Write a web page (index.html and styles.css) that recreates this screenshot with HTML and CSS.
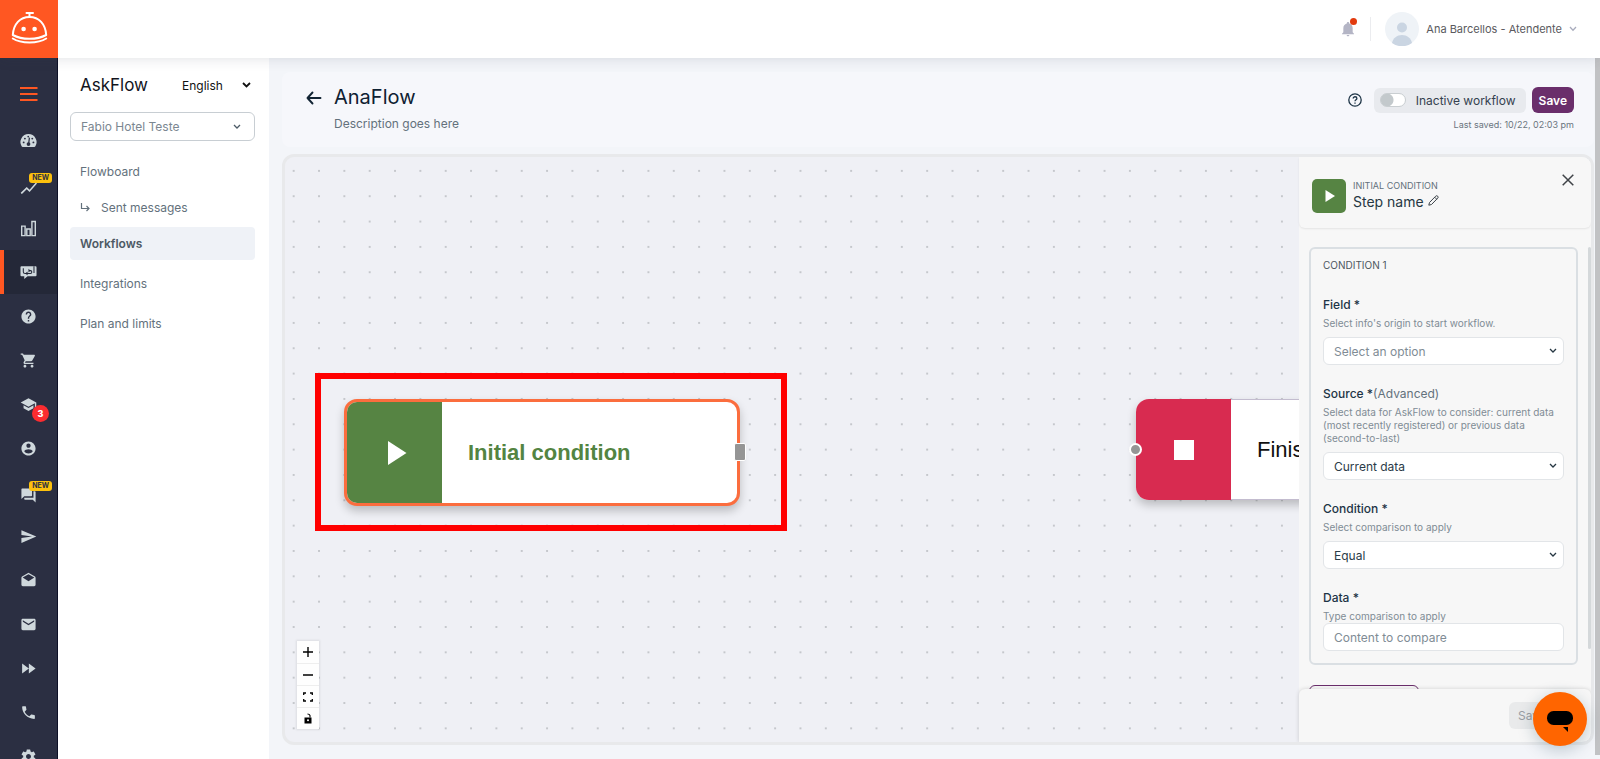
FILE: index.html
```html
<!DOCTYPE html>
<html lang="en">
<head>
    <meta charset="UTF-8">
    <title>AskFlow - AnaFlow</title>
    <link rel="stylesheet" href="styles.css">
</head>
<body>
<header class="topbar">
    <a href="#" class="logo" aria-label="Home">
        <svg width="58" height="58" viewBox="0 0 58 58" fill="none" stroke="#fff" stroke-width="2" stroke-linecap="round">
            <path d="M26.500 13h6.500M29.500 13v4"/>
            <path d="M12.800 35C13.500 24 20 17 29.500 17S45.500 24 46.200 35C37 40 22 40 12.800 35z" stroke-linejoin="round"/>
            <path d="M12.800 38.500c8 5.300 25.400 5.300 33.400 0"/>
            <circle cx="23.600" cy="29" r="2.300" fill="#fff" stroke="none"/>
            <circle cx="34.600" cy="29" r="2.300" fill="#fff" stroke="none"/>
        </svg>
    </a>
    <div class="account">
        <button class="bell" aria-label="Notifications">
            <svg width="16" height="16" viewBox="0 0 24 24" fill="#b4b5c5"><path d="M12 23c1.100 0 2-.9 2-2h-4c0 1.100.9 2 2 2zm7-6v-6c0-3.500-1.900-6.300-5.200-7.100V3.200C13.800 2.300 13 1.500 12 1.500s-1.800.8-1.800 1.700v.7C6.900 4.700 5 7.500 5 11v6l-2 2v1h18v-1z"/></svg>
            <span class="bell-dot"></span>
        </button>
        <span class="divider"></span>
        <button class="user">
            <svg width="34" height="34" viewBox="0 0 34 34">
                <circle cx="17" cy="17" r="17" fill="#eff3f7"/>
                <circle cx="17" cy="15.500" r="5" fill="#cad5e2"/>
                <path d="M7 31c1-5 5-8 10-8s9 3 10 8a17 17 0 0 1-20 0z" fill="#cad5e2"/>
            </svg>
            <span>Ana Barcellos - Atendente</span>
            <svg width="8" height="6" viewBox="0 0 8 6" fill="none" stroke="#a9acbd" stroke-width="1.300"><path d="M1 1l3 3.200L7 1"/></svg>
        </button>
    </div>
</header>

<div class="page">
    <!-- icon rail -->
    <nav class="rail" aria-label="Main">
        <button class="rail-menu" aria-label="Menu">
            <svg width="18" height="16" viewBox="0 0 18 16" stroke="#ff5722" stroke-width="2"><path d="M0 2h17.500M0 8h17.500M0 14h17.500"/></svg>
        </button>
        <a href="#" aria-label="Dashboard"><svg viewBox="0 0 18 18"><path d="M9 2.200a8.500 8.500 0 0 0-7.300 12.900c.3.500.7.700 1.200.7h12.200c.5 0 .9-.2 1.200-.7A8.500 8.500 0 0 0 9 2.200z"/><path d="M9 13.500l1-7.500" stroke="#2b2f42" stroke-width="1.300"/><g fill="#2b2f42"><circle cx="9" cy="12.800" r="2"/><circle cx="3.900" cy="11" r="1"/><circle cx="5.200" cy="7" r="1"/><circle cx="8.700" cy="4.800" r=".9"/><circle cx="13" cy="7" r="1"/><circle cx="14.200" cy="11" r="1"/></g></svg></a>
        <a href="#" class="has-new" aria-label="Trends"><svg viewBox="0 0 24 24"><path d="M3.500 20.500l6-6 4 4L24 6.400l-1.600-1.600-8.900 10.500-4-4L1 19.500l1.300 1.800z"/></svg><span class="new">NEW</span></a>
        <a href="#" aria-label="Reports"><svg viewBox="0 0 18 18"><path d="M1.800 6.500h3.600v10H1.800zM7.200 9.500h3.600v7H7.200zM12.600 1.500h3.600v15h-3.600z" fill="none" stroke="#cfd8dc" stroke-width="1.500"/></svg></a>
        <a href="#" class="active" aria-label="AskFlow"><svg viewBox="0 0 18 18"><path d="M1.500 2.500h15q1 0 1 1v8.500q0 1-1 1H8L4.500 16v-3h-3q-1 0-1-1V3.500q0-1 1-1z"/><path d="M3.500 4.500v4q0 1.500 2 1.500h5.500q1.500 0 1.500-1.500T11 7H9.500M14.800 2.500v7" fill="none" stroke="#242838" stroke-width="1.100"/><path d="M8 8v4L5.500 10zM9 5v4l2-2z" fill="#242838"/></svg></a>
        <a href="#" aria-label="Help"><svg viewBox="0 0 24 24"><path d="M12 2C6.480 2 2 6.480 2 12s4.480 10 10 10 10-4.480 10-10S17.520 2 12 2zm1 17h-2v-2h2v2zm2.070-7.750l-.9.920C13.450 12.900 13 13.500 13 15h-2v-.5c0-1.100.45-2.100 1.170-2.830l1.240-1.260c.37-.36.590-.86.590-1.410 0-1.100-.9-2-2-2s-2 .9-2 2H8c0-2.210 1.790-4 4-4s4 1.790 4 4c0 .88-.36 1.680-.93 2.250z"/></svg></a>
        <a href="#" aria-label="Store"><svg viewBox="0 0 24 24"><path d="M7 18c-1.100 0-1.990.9-1.990 2S5.900 22 7 22s2-.9 2-2-.9-2-2-2zM1 2v2h2l3.600 7.590-1.350 2.450c-.16.280-.25.610-.25.960 0 1.100.9 2 2 2h12v-2H7.420c-.14 0-.25-.11-.25-.25l.03-.12.900-1.630h7.450c.75 0 1.410-.41 1.750-1.030l3.580-6.490A1 1 0 0 0 20 4H5.210l-.94-2H1zm16 16c-1.100 0-1.990.9-1.990 2s.89 2 1.990 2 2-.9 2-2-.9-2-2-2z"/></svg></a>
        <a href="#" aria-label="Academy"><svg viewBox="0 0 24 24"><path d="M5 13.180v4L12 21l7-3.820v-4L12 17l-7-3.820zM12 3L1 9l11 6 9-4.910V17h2V9L12 3z"/></svg><span class="count">3</span></a>
        <a href="#" aria-label="Profile"><svg viewBox="0 0 24 24"><path d="M12 2C6.480 2 2 6.480 2 12s4.480 10 10 10 10-4.480 10-10S17.520 2 12 2zm0 3c1.660 0 3 1.340 3 3s-1.340 3-3 3-3-1.340-3-3 1.340-3 3-3zm0 14.200c-2.500 0-4.710-1.280-6-3.220.03-1.990 4-3.080 6-3.080 1.990 0 5.970 1.090 6 3.080-1.290 1.940-3.500 3.220-6 3.220z"/></svg></a>
        <a href="#" class="has-new" aria-label="Chats"><svg viewBox="0 0 24 24"><path d="M21 6h-2v9H6v2c0 .55.450 1 1 1h11l4 4V7c0-.55-.45-1-1-1zm-4 6V3c0-.55-.45-1-1-1H3c-.55 0-1 .450-1 1v14l4-4h10c.55 0 1-.45 1-1z"/></svg><span class="new">NEW</span></a>
        <a href="#" aria-label="Send"><svg viewBox="0 0 24 24"><path d="M2.010 21L23 12 2.010 3 2 10l15 2-15 2z"/></svg></a>
        <a href="#" aria-label="Inbox"><svg viewBox="0 0 24 24"><path d="M21.990 8c0-.72-.37-1.350-.94-1.700L12 1 2.950 6.300C2.380 6.650 2 7.280 2 8v10c0 1.100.9 2 2 2h16c1.100 0 2-.9 2-2l-.01-10zM12 13L3.740 7.840 12 3l8.260 4.840L12 13z"/></svg></a>
        <a href="#" aria-label="Mail"><svg viewBox="0 0 24 24"><path d="M20 4H4c-1.100 0-1.990.9-1.990 2L2 18c0 1.100.9 2 2 2h16c1.100 0 2-.9 2-2V6c0-1.100-.9-2-2-2zm0 4l-8 5-8-5V6l8 5 8-5v2z"/></svg></a>
        <a href="#" aria-label="Forward"><svg viewBox="0 0 24 24"><path d="M3 19l9.500-7L3 5v14zM12.500 5v14l9.500-7z"/></svg></a>
        <a href="#" aria-label="Calls"><svg viewBox="0 0 24 24"><path d="M6.620 10.790c1.440 2.830 3.760 5.140 6.590 6.590l2.200-2.200c.27-.27.670-.36 1.020-.24 1.120.37 2.330.57 3.570.57.550 0 1 .45 1 1V20c0 .55-.45 1-1 1-9.390 0-17-7.610-17-17 0-.55.450-1 1-1h3.500c.55 0 1 .45 1 1 0 1.250.2 2.450.57 3.570.11.350.03.740-.25 1.020l-2.200 2.200z"/></svg></a>
        <a href="#" aria-label="Settings"><svg viewBox="0 0 24 24"><path d="M19.430 12.980c.04-.32.070-.64.070-.98s-.03-.66-.07-.98l2.110-1.650c.19-.15.240-.42.120-.64l-2-3.460c-.12-.22-.39-.3-.61-.22l-2.490 1c-.52-.4-1.080-.73-1.690-.98l-.38-2.650A.49.490 0 0 0 14 2h-4c-.25 0-.46.180-.49.420l-.38 2.650c-.61.250-1.170.59-1.690.98l-2.490-1c-.23-.09-.49 0-.61.220l-2 3.460c-.13.220-.07.490.12.640l2.110 1.650c-.04.320-.07.650-.07.980s.03.660.07.980l-2.110 1.650c-.19.150-.24.420-.12.640l2 3.460c.12.220.39.300.61.220l2.490-1c.52.400 1.080.73 1.690.98l.38 2.650c.03.240.24.420.49.420h4c.25 0 .46-.18.490-.42l.38-2.650c.61-.25 1.170-.59 1.690-.98l2.490 1c.23.090.49 0 .61-.22l2-3.460c.12-.22.070-.49-.12-.64l-2.110-1.650zM12 15.500c-1.930 0-3.500-1.570-3.500-3.500s1.570-3.500 3.500-3.500 3.500 1.570 3.500 3.500-1.570 3.500-3.500 3.500z"/></svg></a>
    </nav>

    <!-- AskFlow menu -->
    <aside class="menu">
        <div class="menu-head">
            <h2>AskFlow</h2>
            <div class="select language">
                <select aria-label="Language"><option>English</option></select>
                <svg width="9" height="6" viewBox="0 0 9 6" fill="none" stroke="#111" stroke-width="1.800"><path d="M1 1l3.500 3.500L8 1"/></svg>
            </div>
        </div>
        <div class="select hotel">
            <select aria-label="Hotel"><option>Fabio Hotel Teste</option></select>
            <svg width="8" height="6" viewBox="0 0 8 6" fill="none" stroke="#4d5b66" stroke-width="1.300"><path d="M1 1l3 3L7 1"/></svg>
        </div>
        <ul>
            <li class="tight"><a href="#">Flowboard</a></li>
            <li class="tight"><a href="#"><svg width="10" height="10" viewBox="0 0 10 10" fill="none" stroke="#63717c" stroke-width="1.200"><path d="M1.500 0v5.500H9M6.500 3L9 5.500 6.500 8"/></svg>Sent messages</a></li>
            <li><a href="#" class="current">Workflows</a></li>
            <li><a href="#">Integrations</a></li>
            <li><a href="#">Plan and limits</a></li>
        </ul>
    </aside>

    <main class="main">
        <div class="flow-head">
            <button class="back" aria-label="Back">
                <svg width="16" height="14" viewBox="0 0 16 14" fill="none" stroke="#122433" stroke-width="1.900" stroke-linecap="round" stroke-linejoin="round"><path d="M6.500 1.500L1.500 7l5 5.500M1.500 7h13"/></svg>
            </button>
            <div class="flow-title">
                <h1>AnaFlow</h1>
                <p>Description goes here</p>
            </div>
            <div class="flow-side">
                <div class="flow-actions">
                    <button class="help" aria-label="Help">
                        <svg width="14" height="14" viewBox="0 0 14 14" fill="none" stroke="#1d3446" stroke-width="1.300"><circle cx="7" cy="7" r="6.200"/><path d="M5.200 5.500c0-2.400 3.700-2.300 3.700-.1C8.900 6.700 7 6.800 7 8.300M7 9.500v1.300"/></svg>
                    </button>
                    <label class="toggle"><input type="checkbox"><span>Inactive workflow</span></label>
                    <button class="save">Save</button>
                </div>
                <p>Last saved: 10/22, 02:03 pm</p>
            </div>
        </div>

        <section class="board">
            <div class="canvas">
                <svg class="dots" width="100%" height="100%">
                    <defs>
                        <pattern id="grid" x="-4" y="1.200" width="25.340" height="25.340" patternUnits="userSpaceOnUse">
                            <circle cx="12.670" cy="12.670" r=".9" fill="#b3b5ba"/>
                        </pattern>
                    </defs>
                    <rect width="100%" height="100%" fill="url(#grid)"/>
                </svg>
                <div class="highlight"></div>
                <div class="node node-start">
                    <div class="node-icon"><svg width="20" height="24" viewBox="0 0 20 24" fill="#fff"><path d="M1 0l18.500 12L1 24z"/></svg></div>
                    <div class="node-name">Initial condition</div>
                    <span class="port port-out"></span>
                </div>
                <div class="node node-end">
                    <div class="node-icon"><svg width="20" height="20" viewBox="0 0 20 20" fill="#fff"><path d="M0 0h20v20H0z"/></svg></div>
                    <div class="node-name">Finish</div>
                    <span class="port port-in"></span>
                </div>
                <div class="controls">
                    <button aria-label="Zoom in"><svg width="10" height="10" viewBox="0 0 10 10" stroke="#000" stroke-width="1.400"><path d="M0 5h10M5 0v10"/></svg></button>
                    <button aria-label="Zoom out"><svg width="10" height="10" viewBox="0 0 10 10" stroke="#000" stroke-width="1.400"><path d="M0 5h10"/></svg></button>
                    <button aria-label="Fit view"><svg width="10" height="10" viewBox="0 0 10 10" fill="none" stroke="#000" stroke-width="1.300"><path d="M.7 3V1H3M7 1h2.300v2M9.300 7v2H7M3 9H.7V7"/></svg></button>
                    <button aria-label="Lock"><svg width="10" height="11" viewBox="0 0 10 11"><path d="M1.500 4.500h7v6h-7z"/><path d="M7 4.500V2.500Q6.500 1 4.500 1" fill="none" stroke="#000" stroke-width="1.100"/><circle cx="5" cy="7.300" r="1" fill="#fff"/></svg></button>
                </div>
            </div>

            <form class="panel">
                <div class="panel-head">
                    <div class="step-icon"><svg width="10" height="12" viewBox="0 0 10 12" fill="#fff"><path d="M.5 0L10 6 .5 12z"/></svg></div>
                    <div class="step-text">
                        <small>INITIAL CONDITION</small>
                        <div class="step-name">Step name
                            <button type="button" aria-label="Rename step"><svg width="11" height="11" viewBox="0 0 11 11" fill="none" stroke="#3b4248" stroke-width="1"><path d="M.8 10.200L1.500 7.500 7.700 1.200q1-1 2 0t0 2L3.500 9.500zM6.700 2.200l2 2"/></svg></button>
                        </div>
                    </div>
                    <button type="button" class="close" aria-label="Close"><svg width="12" height="12" viewBox="0 0 12 12" stroke="#3f4347" stroke-width="1.500"><path d="M.7.7l10.600 10.600M11.300.7L.7 11.300"/></svg></button>
                </div>

                <div class="panel-body">
                    <fieldset class="condition">
                        <h3>CONDITION 1</h3>
                        <div class="field">
                            <label for="field">Field *</label>
                            <p>Select info's origin to start workflow.</p>
                            <div class="select">
                                <select id="field" class="empty"><option>Select an option</option></select>
                                <svg width="8" height="6" viewBox="0 0 8 6" fill="none" stroke="#263743" stroke-width="1.300"><path d="M1 1l3 3L7 1"/></svg>
                            </div>
                        </div>
                        <div class="field">
                            <label for="source">Source *<span>(Advanced)</span></label>
                            <p>Select data for AskFlow to consider: current data (most recently registered) or previous data (second-to-last)</p>
                            <div class="select">
                                <select id="source"><option>Current data</option></select>
                                <svg width="8" height="6" viewBox="0 0 8 6" fill="none" stroke="#263743" stroke-width="1.300"><path d="M1 1l3 3L7 1"/></svg>
                            </div>
                        </div>
                        <div class="field">
                            <label for="condition">Condition *</label>
                            <p>Select comparison to apply</p>
                            <div class="select">
                                <select id="condition"><option>Equal</option></select>
                                <svg width="8" height="6" viewBox="0 0 8 6" fill="none" stroke="#263743" stroke-width="1.300"><path d="M1 1l3 3L7 1"/></svg>
                            </div>
                        </div>
                        <div class="field field-text">
                            <label for="data">Data *</label>
                            <p>Type comparison to apply</p>
                            <input id="data" type="text" placeholder="Content to compare">
                        </div>
                    </fieldset>
                    <button type="button" class="add" aria-label="Add condition"></button>
                    <span class="panel-scroll"></span>
                </div>

                <div class="panel-foot">
                    <button type="button" disabled>Save</button>
                </div>
            </form>
        </section>
    </main>
    <div class="scrollbar"></div>
</div>

<button class="chat" aria-label="Open chat">
    <svg width="54" height="54" viewBox="0 0 54 54"><rect x="14" y="19" width="26" height="14" rx="6.500"/><path d="M30 35h5v5z"/></svg>
</button>
</body>
</html>
```
FILE: styles.css
```css
* {
    box-sizing: border-box;
    margin: 0;
    padding: 0;
}

body {
    display: flex;
    flex-direction: column;
    height: 100vh;
    overflow: hidden;
    font-family: Inter, "Liberation Sans", sans-serif;
    font-size: 12px;
    color: #1d3446;
    background-color: #f3f5f9;
}

button, input, select {
    font: inherit;
    color: inherit;
}

button {
    border: 0;
    background: none;
    cursor: pointer;
}

a {
    color: inherit;
    text-decoration: none;
}

ul {
    list-style: none;
}

svg {
    display: block;
    flex: none;
}

/* top bar */
.topbar {
    display: flex;
    flex: none;
    justify-content: space-between;
    height: 58px;
    background-color: #fff;
    box-shadow: 0 1px 12px rgba(50, 55, 75, 0.14);
    position: relative;
    z-index: 2;
}

.logo {
    width: 58px;
    background-color: #ff5722;
}

.account {
    display: flex;
    align-items: center;
    padding-right: 23px;
}

.bell {
    position: relative;
}

.bell-dot {
    position: absolute;
    top: -3px;
    right: -1px;
    width: 7px;
    height: 7px;
    border-radius: 50%;
    background-color: #e23a0e;
}

.divider {
    width: 1px;
    height: 24px;
    margin: 0 14px;
    background-color: #ebecef;
}

.user {
    display: flex;
    align-items: center;
    gap: 7px;
    color: #5a5a5e;
    font-size: 11px;
}

/* layout under the bar */
.page {
    display: flex;
    flex: 1;
    min-height: 0;
}

.rail {
    flex: none;
    width: 58px;
    overflow: hidden;
    background-color: #2b2f42;
    border-right: 1px solid #0d1026;
}

.rail-menu {
    display: flex;
    align-items: center;
    justify-content: center;
    width: 100%;
    height: 60px;
    padding-top: 12px;
}

.rail a {
    display: flex;
    align-items: center;
    justify-content: center;
    position: relative;
    height: 44px;
}

.rail a svg {
    width: 17px;
    height: 17px;
    fill: #cfd8dc;
}

.rail .active {
    background-color: #242838;
    box-shadow: inset 4px 0 #ff5722;
}

.rail .has-new {
    padding-top: 6px;
}

.new {
    position: absolute;
    top: 11px;
    right: 5px;
    padding: 0 3px;
    border-radius: 3px;
    background-color: #fdc10d;
    color: #2b2f42;
    font-size: 7px;
    font-weight: 700;
    line-height: 10px;
}

.count {
    position: absolute;
    top: 23px;
    right: 8px;
    width: 17px;
    border-radius: 50%;
    background-color: #fb2c30;
    color: #fff;
    font-size: 9px;
    font-weight: 800;
    line-height: 17px;
    text-align: center;
}

/* selects */
.select {
    position: relative;
}

.select select,
.field input {
    appearance: none;
    width: 100%;
    height: 28px;
    padding: 0 10px;
    border: 1px solid #e2e5e8;
    border-radius: 6px;
    background-color: #fff;
    color: #2b3b48;
}

.select svg {
    position: absolute;
    top: 50%;
    right: 7px;
    margin-top: -3px;
    pointer-events: none;
}

/* AskFlow menu */
.menu {
    flex: none;
    width: 211px;
    padding: 13px 14px 0 12px;
    background-color: #fff;
}

.menu-head {
    display: flex;
    align-items: center;
    justify-content: space-between;
    padding-left: 10px;
    margin-bottom: 13px;
}

.menu-head h2 {
    color: #12141c;
    font-size: 17px;
    font-weight: 400;
}

.language {
    width: 73px;
}

.language select {
    padding: 0;
    border: 0;
    color: #111;
}

.language svg {
    right: 4px;
}

.hotel select {
    height: 29px;
    border-color: #c8ced3;
    color: #7b8791;
}

.hotel svg {
    right: 14px;
}

.menu ul {
    margin-top: 14px;
}

.menu li {
    margin-bottom: 7px;
}

.menu .tight {
    margin-bottom: 3px;
}

.menu li a {
    display: flex;
    align-items: center;
    gap: 11px;
    height: 33px;
    padding-left: 10px;
    border-radius: 4px;
    color: #63717c;
}

.menu .current {
    background-color: #eff2f7;
    color: #4d5964;
    font-weight: 600;
}

/* workflow */
.main {
    display: flex;
    flex: 1;
    flex-direction: column;
    gap: 7px;
    min-width: 0;
    padding: 14px 1px 14px 13px;
}

.flow-head {
    display: flex;
    flex: none;
    height: 75px;
    padding: 11px 20px 0 24px;
    border-radius: 8px;
    background-color: #f6f7fb;
}

.back {
    align-self: flex-start;
    height: 30px;
}

.flow-title {
    flex: 1;
    padding-left: 12px;
}

.flow-title h1 {
    color: #0f2132;
    font-size: 20px;
    font-weight: 400;
    line-height: 28px;
}

.flow-title p {
    margin-top: 4px;
    color: #63717c;
    line-height: 18px;
}

.flow-side {
    padding-top: 4px;
}

.flow-side p {
    margin-top: 4px;
    color: #6a757e;
    font-size: 9px;
    line-height: 16px;
    text-align: right;
}

.flow-actions {
    display: flex;
    align-items: center;
    gap: 6px;
}

.help {
    margin-right: 6px;
}

.toggle {
    display: flex;
    align-items: center;
    gap: 10px;
    height: 25px;
    padding: 0 10px 0 6px;
    border-radius: 6px;
    background-color: #e8eaee;
    color: #34414f;
}

.toggle input {
    appearance: none;
    width: 26px;
    height: 14px;
    border: 1px solid #c9ced1;
    border-radius: 7px;
    background: radial-gradient(circle at 6px 6px, #c3c9cc 6px, #fff 7px);
}

.save {
    height: 26px;
    padding: 0 7px;
    border-radius: 6px;
    background-color: #6a2e6b;
    color: #fff;
    font-weight: 600;
}

.board {
    display: flex;
    flex: 1;
    min-height: 0;
    overflow: hidden;
    border: 3px solid #e8e9eb;
    border-radius: 12px;
    background-color: #eff0f5;
}

.canvas {
    flex: 1;
    position: relative;
    min-width: 0;
    overflow: hidden;
    font-family: "Liberation Sans", Arial, sans-serif;
}

.dots {
    position: absolute;
    inset: 0;
}

.highlight {
    position: absolute;
    left: 30px;
    top: 216px;
    width: 472px;
    height: 158px;
    border: 6px solid #f00;
}

.node {
    display: flex;
    position: absolute;
    border-radius: 13px;
    background-color: #fff;
    box-shadow: 0 5px 10px rgba(0, 0, 0, 0.22);
    font-size: 22px;
}

.node-icon {
    display: flex;
    align-items: center;
    justify-content: center;
    width: 95px;
}

.node-name {
    align-self: center;
    padding-left: 26px;
}

.node-start {
    left: 59px;
    top: 242px;
    width: 396px;
    height: 107px;
    border: 3px solid #fb6d3e;
    color: #538442;
    font-weight: 700;
}

.node-start .node-icon {
    padding-left: 4px;
    border-radius: 10px 0 0 10px;
    background-color: #568443;
}

.node-end {
    left: 851px;
    top: 242px;
    width: 396px;
    height: 101px;
    color: #111;
}

.node-end .node-icon {
    border-radius: 13px 0 0 13px;
    background-color: #d82b50;
}

.node-end .node-name {
    display: flex;
    align-items: center;
    align-self: stretch;
    flex: 1;
    border: 1px solid #c3bccf;
    border-left: 0;
    border-radius: 0 13px 13px 0;
}

.port {
    position: absolute;
    border: 1px solid #fff;
    background-color: #959595;
}

.port-out {
    top: 41px;
    right: -9px;
    width: 12px;
    height: 18px;
    border-radius: 2px;
}

.port-in {
    top: 44px;
    left: -7px;
    width: 13px;
    height: 13px;
    border-width: 2px;
    border-radius: 50%;
}

.controls {
    position: absolute;
    left: 12px;
    bottom: 13px;
    box-shadow: 0 0 2px 1px rgba(0, 0, 0, 0.08);
}

.controls button {
    display: flex;
    align-items: center;
    justify-content: center;
    width: 22px;
    height: 22px;
    background-color: #fefefe;
}

.controls button + button {
    border-top: 1px solid #eee;
}

/* step panel */
.panel {
    display: flex;
    flex: none;
    flex-direction: column;
    width: 292px;
    background-color: #f7f7f7;
}

.panel-head {
    display: flex;
    flex: none;
    gap: 7px;
    height: 71px;
    padding: 22px 17px 0 13px;
    border-radius: 0 0 6px 6px;
    background-color: #f7f7f7;
    box-shadow: 0 1px 2px rgba(0, 0, 0, 0.08);
}

.step-icon {
    display: flex;
    align-items: center;
    justify-content: center;
    width: 34px;
    height: 34px;
    padding-left: 2px;
    border-radius: 5px;
    background-color: #568443;
}

.step-text {
    flex: 1;
}

.step-text small {
    display: block;
    color: #63717c;
    font-size: 9px;
    line-height: 14px;
}

.step-name {
    display: flex;
    gap: 4px;
    color: #263743;
    font-size: 14px;
    line-height: 18px;
}

.step-name button {
    align-self: flex-start;
    padding-top: 2px;
}

.close {
    align-self: flex-start;
    margin-top: -5px;
}

.panel-body {
    flex: 1;
    position: relative;
    min-height: 0;
    padding: 19px 13px 0 10px;
    overflow: hidden;
}

.condition {
    padding: 8px 12px 12px;
    border: 2px solid #dadfe3;
    border-radius: 6px;
}

.condition h3 {
    margin-bottom: 23px;
    color: #4c565e;
    font-size: 10px;
    font-weight: 400;
    line-height: 16px;
}

.field + .field {
    margin-top: 20px;
}

.field label {
    display: block;
    font-weight: 500;
    line-height: 18px;
}

.field label span {
    color: #63717c;
    font-weight: 400;
}

.field p {
    margin: 3px 0 7px;
    color: #808c95;
    font-size: 10px;
    line-height: 13px;
}

.field .empty,
.field input::placeholder {
    color: #808c95;
}

.field-text p {
    margin-bottom: 0;
}

.add {
    display: block;
    width: 110px;
    height: 28px;
    margin-top: 20px;
    border: 1px solid #6a2e6b;
    border-radius: 6px;
}

.panel-scroll {
    position: absolute;
    top: 19px;
    right: 0;
    width: 3px;
    height: 402px;
    border-radius: 2px;
    background-color: #d4d8da;
}

.panel-foot {
    display: flex;
    flex: none;
    justify-content: flex-end;
    height: 53px;
    padding: 13px 36px 0 0;
    border-radius: 6px 6px 0 0;
    background-color: #f7f7f7;
    box-shadow: 0 0 4px rgba(0, 0, 0, 0.16);
    position: relative;
}

.panel-foot button {
    width: 46px;
    height: 27px;
    border-radius: 6px;
    background-color: #e9eaeb;
    color: #999ea3;
}

.scrollbar {
    flex: none;
    width: 5px;
    margin-bottom: 4px;
    background-color: #c1c2c4;
}

.chat {
    position: fixed;
    right: 13px;
    bottom: 13px;
    z-index: 3;
    width: 54px;
    height: 54px;
    border-radius: 50%;
    background-color: #ff6500;
    box-shadow: 0 4px 16px rgba(20, 60, 80, 0.25);
}
```
